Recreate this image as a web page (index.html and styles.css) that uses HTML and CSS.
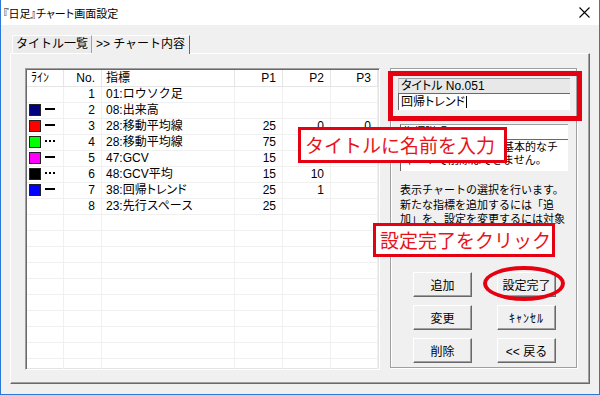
FILE: index.html
```html
<!DOCTYPE html>
<html lang="ja">
  <head>
    <meta charset="UTF-8" />
    <title>『日足』チャート画面設定</title>
    <link rel="stylesheet" href="styles.css">
  </head>
  <body>
    <div class="shot">
      <div class="window">
        <div class="titlebar">
          <span class="caption pk">『日足』チャート画面設定</span>
          <span class="close">
            <svg width="11" height="11" viewBox="0 0 11 11">
              <path d="M0.5 0.5L10.5 10.5M10.5 0.5L0.5 10.5" stroke="#000" stroke-width="1.1" fill="none" />
            </svg>
          </span>
        </div>
        <div class="client">
          <div class="tabs">
            <div class="tab">タイトル一覧</div>
            <div class="tab active">&gt;&gt; チャート内容</div>
          </div>
          <div class="panel">
            <div class="listview">
              <table class="grid">
                <colgroup>
                  <col style="width: 37px" />
                  <col style="width: 38px" />
                  <col style="width: 133px" />
                  <col style="width: 48px" />
                  <col style="width: 48px" />
                  <col style="width: 47px" />
                </colgroup>
                <thead>
                  <tr>
                    <th class="l">ﾗｲﾝ</th>
                    <th>No.</th>
                    <th class="l">指標</th>
                    <th>P1</th>
                    <th>P2</th>
                    <th>P3</th>
                  </tr>
                </thead>
                <tbody>
                  <tr><td></td><td>1</td><td class="l">01:ロウソク足</td><td></td><td></td><td></td></tr>
                  <tr><td><span class="sw navy"></span><span class="ln"></span></td><td>2</td><td class="l">08:出来高</td><td></td><td></td><td></td></tr>
                  <tr><td><span class="sw red"></span><span class="ln"></span></td><td>3</td><td class="l">28:移動平均線</td><td>25</td><td>0</td><td>0</td></tr>
                  <tr><td><span class="sw green"></span><span class="ln dot"></span></td><td>4</td><td class="l">28:移動平均線</td><td>75</td><td>0</td><td>0</td></tr>
                  <tr><td><span class="sw magenta"></span><span class="ln"></span></td><td>5</td><td class="l">47:GCV</td><td>15</td><td></td><td></td></tr>
                  <tr><td><span class="sw black"></span><span class="ln dot"></span></td><td>6</td><td class="l">48:GCV平均</td><td>15</td><td>10</td><td></td></tr>
                  <tr><td><span class="sw blue"></span><span class="ln"></span></td><td>7</td><td class="l">38:回帰<span class="pk">トレンド</span></td><td>25</td><td>1</td><td></td></tr>
                  <tr><td></td><td>8</td><td class="l">23:先行スペース</td><td>25</td><td></td><td></td></tr>
                  <tr><td></td><td></td><td></td><td></td><td></td><td></td></tr>
                  <tr><td></td><td></td><td></td><td></td><td></td><td></td></tr>
                  <tr><td></td><td></td><td></td><td></td><td></td><td></td></tr>
                  <tr><td></td><td></td><td></td><td></td><td></td><td></td></tr>
                  <tr><td></td><td></td><td></td><td></td><td></td><td></td></tr>
                  <tr><td></td><td></td><td></td><td></td><td></td><td></td></tr>
                  <tr><td></td><td></td><td></td><td></td><td></td><td></td></tr>
                  <tr><td></td><td></td><td></td><td></td><td></td><td></td></tr>
                  <tr><td></td><td></td><td></td><td></td><td></td><td></td></tr>
                  <tr><td></td><td></td><td></td><td></td><td></td><td></td></tr>
                </tbody>
              </table>
            </div>
            <div class="groupbox">
              <div class="title-label pk">タイトル No.051</div>
              <div class="title-input pk">回帰トレンド<span class="caret"></span></div>
              <div class="memo">
                <div class="memo-head">指標説明</div>
                <div class="memo-body">ロウソク足は株価の基本的なチ<br />ャートで削除はできません。</div>
              </div>
              <p class="help">
                表示チャートの選択を行います。<br />
                新たな指標を追加するには「追<br />
                加」を、設定を変更するには対象<br />
                の指標を選択して「変更」を押<br />
                してください。
              </p>
              <div class="buttons">
                <button class="btn">追加</button>
                <button class="btn">設定完了</button>
                <button class="btn">変更</button>
                <button class="btn wide">ｷｬﾝｾﾙ</button>
                <button class="btn">削除</button>
                <button class="btn">&lt;&lt; 戻る</button>
              </div>
            </div>
          </div>
        </div>
      </div>
      <!-- annotations -->
      <div class="mark-title"></div>
      <div class="note note-title">タイトルに名前を入力</div>
      <div class="note note-done">設定完了をクリック</div>
      <div class="mark-ring"></div>
    </div>
  </body>
</html>
```

FILE: styles.css
```css
* {
  box-sizing: border-box;
}
body {
  margin: 0;
  background: #fff;
  color: #000;
  font-family: "Liberation Sans", "Noto Sans CJK JP", sans-serif;
  font-size: 12px;
}
.shot {
  position: relative;
  width: 600px;
  height: 395px;
  overflow: hidden;
}
.pk {
  font-feature-settings: "palt";
}
.window {
  width: 600px;
  height: 395px;
  display: flex;
  flex-direction: column;
  background: #f0f0f0;
  border: 1px solid #2b79d6;
  border-top: none;
}
.titlebar {
  flex: none;
  height: 25px;
  display: flex;
  align-items: center;
  justify-content: space-between;
  padding: 0 9px 0 2px;
  background: #fff;
  font-size: 11px;
}
.close {
  display: flex;
}
.client {
  flex: 1;
  padding: 10px 0 0 9px;
}
/* Tabs */
.tabs {
  display: flex;
  align-items: flex-end;
  margin-left: 2px;
  height: 18px;
}
.tab {
  height: 18px;
  line-height: 17px;
  text-align: center;
  white-space: nowrap;
  border-top: 1px solid #fff;
  border-left: 1px solid #fff;
  border-right: 1px solid #a0a0a0;
  background: #ebebeb;
}
.tab:first-child {
  width: 80px;
}
.tab.active {
  position: relative;
  z-index: 1;
  width: 98px;
  height: 19px;
  margin-bottom: -1px;
  border-left: none;
  border-right: 1px solid #696969;
  background: #f0f0f0;
}
.panel {
  width: 580px;
  height: 331px;
  display: flex;
  gap: 10px;
  padding: 14px 0 0 14px;
  border: 1px solid;
  border-color: #fff #696969 #696969 #fff;
  box-shadow: inset -1px -1px #a0a0a0;
}
/* List view */
.listview {
  width: 355px;
  height: 302px;
  padding: 1px;
  overflow: hidden;
  background: #fff;
  border: 1px solid;
  border-color: #a0a0a0 #fff #fff #a0a0a0;
  box-shadow: inset 1px 1px #696969, inset -1px -1px #e3e3e3;
}
.grid {
  table-layout: fixed;
  width: 351px;
  border-collapse: separate;
  border-spacing: 0;
}
.grid th,
.grid td {
  padding: 0 6px 0 4px;
  text-align: right;
  font-weight: normal;
  white-space: nowrap;
  overflow: hidden;
}
.grid th {
  height: 17px;
  line-height: 16px;
  border-right: 1px solid #e5e5e5;
  border-bottom: 1px solid #e5e5e5;
}
.grid td {
  height: 16px;
  line-height: 15px;
  border-right: 1px solid #f0f0f0;
  border-bottom: 1px solid #f0f0f0;
}
.grid .l {
  text-align: left;
}
.grid td:first-child {
  padding: 0 0 0 2px;
  text-align: left;
}
.sw {
  display: inline-block;
  width: 12px;
  height: 12px;
  border: 1px solid #222;
  vertical-align: -2px;
}
.sw.navy { background: #000080; }
.sw.red { background: #ff0000; }
.sw.green { background: #00ff00; }
.sw.magenta { background: #ff00ff; }
.sw.black { background: #000; }
.sw.blue { background: #0000ff; }
.ln {
  display: inline-block;
  width: 10px;
  margin-left: 4px;
  border-top: 2px solid #000;
  vertical-align: 4px;
}
.ln.dot {
  border-top-style: dotted;
}
/* Right side */
.groupbox {
  width: 187px;
  height: 300px;
  display: flex;
  flex-direction: column;
  padding: 9px 6px 4px 7px;
  border: 1px solid #a0a0a0;
  box-shadow: 1px 1px #fff, inset 1px 1px #fff;
}
.title-label {
  height: 15px;
  padding-left: 2px;
  line-height: 14px;
  background: #e8e8e8;
  border-top: 1px solid #a0a0a0;
  border-left: 1px solid #c8c8c8;
}
.title-input {
  height: 17px;
  padding-left: 2px;
  line-height: 16px;
  background: #fff;
  border-top: 1px solid #696969;
  border-left: 1px solid #696969;
}
.caret {
  display: inline-block;
  width: 1px;
  height: 12px;
  margin-left: 1px;
  background: #000;
  vertical-align: -2px;
}
.memo {
  width: 168px;
  height: 47px;
  margin: 14px 0 0 2px;
  background: #fff;
  border-top: 1px solid #a0a0a0;
  border-left: 1px solid #696969;
  font-size: 11px;
}
.memo-head {
  height: 15px;
  padding-left: 2px;
  line-height: 14px;
  border-bottom: 1px solid #696969;
}
.memo-body {
  padding: 1px 0 0 3px;
  line-height: 12.5px;
}
.help {
  margin: 12px 0 0 2px;
  font-size: 11px;
  line-height: 14.5px;
  white-space: nowrap;
}
.buttons {
  margin: auto 0 0 15px;
  display: grid;
  grid-template-columns: 59px 59px;
  grid-auto-rows: 25px;
  column-gap: 25px;
  row-gap: 8px;
}
.btn {
  padding: 0;
  font: inherit;
  font-size: 12px;
  color: #000;
  background: #f0f0f0;
  border: 1px solid;
  border-color: #fff #696969 #696969 #fff;
  box-shadow: inset -1px -1px #a0a0a0;
}
.btn.wide {
  letter-spacing: 1px;
}
/* Annotations */
.mark-title {
  position: absolute;
  left: 388px;
  top: 71px;
  width: 194px;
  height: 50px;
  border: 5px solid #e50012;
}
.note {
  position: absolute;
  padding-left: 4px;
  background: #fff;
  border: 3px solid #e50012;
  color: #e8141c;
  font-family: "Noto Sans CJK JP", sans-serif;
  font-size: 19px;
}
.note-title {
  left: 298px;
  top: 127px;
  width: 209px;
  height: 36px;
  line-height: 30px;
}
.note-done {
  left: 373px;
  top: 223px;
  width: 182px;
  height: 34px;
  line-height: 28px;
}
.mark-ring {
  position: absolute;
  left: 483px;
  top: 266px;
  width: 82px;
  height: 35px;
  border: 4px solid #e50012;
  border-radius: 50%;
}
```
